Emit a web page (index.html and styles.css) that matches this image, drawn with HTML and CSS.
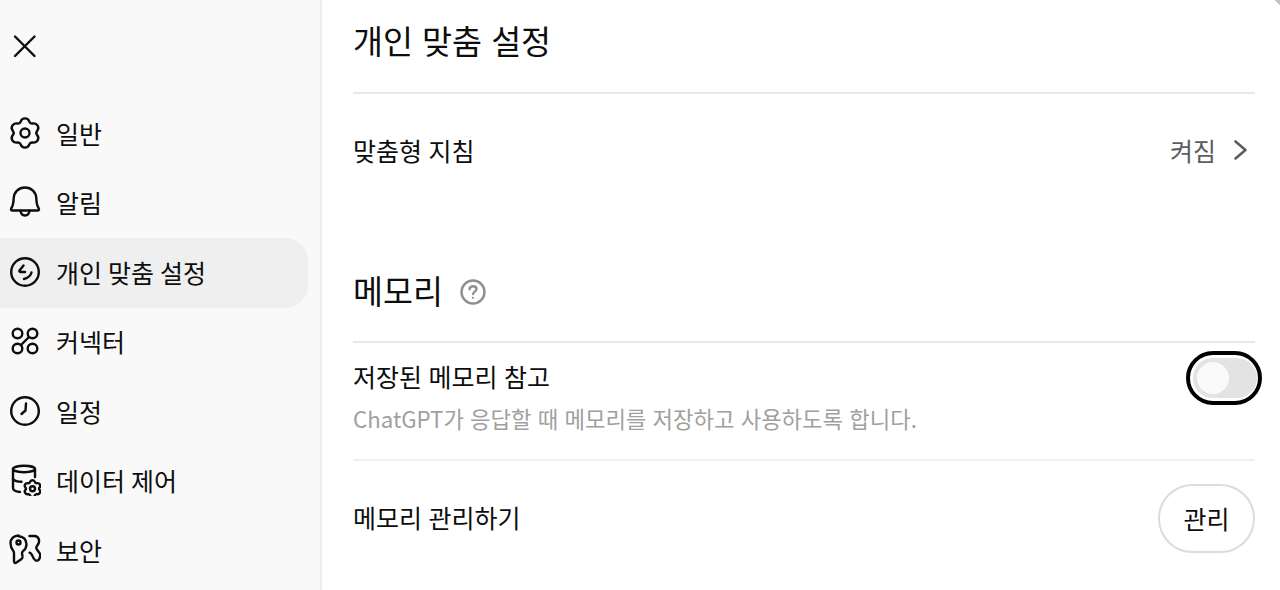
FILE: index.html
```html
<!DOCTYPE html>
<html lang="ko">
<head>
    <meta charset="UTF-8">
    <title>개인 맞춤 설정</title>
    <link rel="stylesheet" href="styles.css">
</head>
<body>
    <div class="dialog">
        <aside class="sidebar">
            <button class="close-btn" aria-label="닫기">
                <svg class="icon" viewBox="0 0 28 28"><path d="M4 4.500 23.500 24M23.500 4.500 4 24"/></svg>
            </button>
            <nav class="nav">
                <a class="nav-item">
                    <svg class="icon" viewBox="0 0 32 32"><path d="M20.350 4.520A3 3 0 0 0 23.770 6.490A4.600 4.600 0 0 1 28.120 14.030A3 3 0 0 0 28.120 17.970A4.600 4.600 0 0 1 23.770 25.510A3 3 0 0 0 20.350 27.480A4.600 4.600 0 0 1 11.650 27.480A3 3 0 0 0 8.230 25.510A4.600 4.600 0 0 1 3.880 17.970A3 3 0 0 0 3.880 14.030A4.600 4.600 0 0 1 8.230 6.490A3 3 0 0 0 11.650 4.520A4.600 4.600 0 0 1 20.350 4.520Z"/><circle cx="16" cy="16" r="4.500"/></svg>
                    <span>일반</span>
                </a>
                <a class="nav-item">
                    <svg class="icon" viewBox="0 0 32 32"><path d="M16 1.500c-6.500 0-11 4.800-11.300 10.800-.2 5-1 8-2.400 10-.7 1.100-.1 2.200 1.200 2.200h25c1.300 0 1.900-1.100 1.200-2.200-1.400-2-2.200-5-2.400-10C27 6.300 22.500 1.500 16 1.500Z"/><path d="M11.500 24.700c.3 2.800 2.200 4.800 4.500 4.800s4.200-2 4.500-4.800"/></svg>
                    <span>알림</span>
                </a>
                <a class="nav-item is-active">
                    <svg class="icon" viewBox="0 0 32 32"><circle cx="16" cy="16" r="13.800"/><path d="M14.500 9.500 10.500 14.500c-.4.7 0 1.500.8 1.500H16"/><path d="M22.500 16.500c-.8 3-3.500 5.500-7.500 6.500"/></svg>
                    <span>개인 맞춤 설정</span>
                </a>
                <a class="nav-item">
                    <svg class="icon" viewBox="0 0 32 32"><circle cx="8.500" cy="8.500" r="4.800"/><circle cx="23.500" cy="8.500" r="4.800"/><circle cx="8.500" cy="23.500" r="4.800"/><circle cx="23.500" cy="23.500" r="4.800"/><path d="M20 12 12 20"/></svg>
                    <span>커넥터</span>
                </a>
                <a class="nav-item">
                    <svg class="icon" viewBox="0 0 32 32"><circle cx="16" cy="16" r="13.800"/><path d="M17 8.500 16.500 15.500 12.500 19"/></svg>
                    <span>일정</span>
                </a>
                <a class="nav-item">
                    <svg class="icon" viewBox="0 0 32 32"><ellipse cx="15" cy="5" rx="11" ry="3.200"/><path d="M4 5v19c0 2 2 3.500 7 4"/><path d="M26 5v8"/><path d="M4 15c1.600 2 5.200 2.800 8.500 2.800"/><path class="scaled" transform="translate(14.200 15.400) scale(.58)" d="M20.350 4.520A3 3 0 0 0 23.770 6.490A4.600 4.600 0 0 1 28.120 14.030A3 3 0 0 0 28.120 17.970A4.600 4.600 0 0 1 23.770 25.510A3 3 0 0 0 20.350 27.480A4.600 4.600 0 0 1 11.650 27.480A3 3 0 0 0 8.230 25.510A4.600 4.600 0 0 1 3.880 17.970A3 3 0 0 0 3.880 14.030A4.600 4.600 0 0 1 8.230 6.490A3 3 0 0 0 11.650 4.520A4.600 4.600 0 0 1 20.350 4.520Z"/><circle cx="23.500" cy="24.700" r="2.500"/></svg>
                    <span>데이터 제어</span>
                </a>
                <a class="nav-item">
                    <svg class="icon" viewBox="0 0 32 32"><path d="M9.500 1.500C5 1.500 1.500 4.800 1.500 9.200c0 3.300 1.400 6 3 8 .5.700.5 1.300.5 2.300v7.500c0 2 1 2.500 2.500 1.500l5-3.500c1-.7 1.300-1.500 1-2.800l-.5-2.500c-.2-1 .2-1.700 1-2.500 2-1.700 3.500-4.200 3.500-7 0-4.800-3.500-8-8-8Z"/><circle cx="9.500" cy="8.500" r="2"/><path d="M20.500 2h4.500c2.800 0 4.500 1.500 5 4 .4 2-.4 3.800-1.700 5.500-1 1.300-1.400 2.500-.5 3.700l2.500 3.500c1 1.500 1.200 3.500.3 5.500-.8 2-2.500 3-4.300 2-1.700-1-2.400-3-3.200-5-.4-1-1-2-2.500-2.500"/></svg>
                    <span>보안</span>
                </a>
            </nav>
        </aside>
        <main class="content">
            <h1 class="title">개인 맞춤 설정</h1>
            <div class="row row-instructions">
                <span>맞춤형 지침</span>
                <span class="row-value">
                    켜짐
                    <svg class="chevron" viewBox="0 0 20 28"><path d="M4.500 5.500 14.500 14 4.500 22.500"/></svg>
                </span>
            </div>
            <div class="section-head">
                <h2 class="section-title">메모리</h2>
                <svg class="help" viewBox="0 0 28 28"><circle cx="14" cy="14" r="11.500"/><path d="M10.600 11.200c.2-1.900 1.600-3 3.500-3s3.400 1.200 3.400 2.900c0 2.500-3.400 2.600-3.400 5"/><circle class="help-dot" cx="14" cy="19.800" r="1.100"/></svg>
            </div>
            <div class="row row-memory">
                <div>
                    <div class="row-label">저장된 메모리 참고</div>
                    <div class="row-desc">ChatGPT가 응답할 때 메모리를 저장하고 사용하도록 합니다.</div>
                </div>
                <div class="switch-focus">
                    <div class="switch"><span class="knob"></span></div>
                </div>
            </div>
            <div class="row row-manage">
                <span class="manage-label">메모리 관리하기</span>
                <button class="btn">관리</button>
            </div>
        </main>
    </div>
    <div class="corner"></div>
</body>
</html>
```

FILE: styles.css
```css
* {
    margin: 0;
    padding: 0;
    box-sizing: border-box;
}

html, body {
    height: 100%;
    overflow: hidden;
}

body {
    font-family: "Noto Sans CJK KR", "Noto Sans", sans-serif;
    font-size: 25px;
    word-spacing: -0.5px;
    color: #0d0d0d;
    background: #fff;
}

.dialog {
    display: flex;
    height: 590px;
}

.icon {
    width: 32px;
    height: 32px;
    flex: none;
    fill: none;
    stroke: #0d0d0d;
    stroke-width: 2.400;
    stroke-linecap: round;
    stroke-linejoin: round;
}

.scaled {
    vector-effect: non-scaling-stroke;
}

/* dialog corner peeking in at the top right */
.corner {
    position: absolute;
    top: 0;
    right: 0;
    width: 5px;
    height: 5px;
    background: linear-gradient(to top right, transparent 50%, #c4c4c4 50%);
}

/* sidebar */
.sidebar {
    width: 322px;
    flex: none;
    background: #f9f9f9;
    border-right: 2px solid #ededed;
    padding: 32px 12px 0 0;
}

.close-btn {
    display: block;
    width: 28px;
    height: 28px;
    margin-left: 11px;
    background: none;
    border: 0;
}

.close-btn .icon {
    width: 28px;
    height: 28px;
}

.nav {
    display: flex;
    flex-direction: column;
    margin-top: 39px;
}

.nav-item {
    display: flex;
    align-items: center;
    gap: 15px;
    height: 69.500px;
    padding: 0 0 2px 9px;
    word-spacing: -1px;
    border-radius: 0 22px 22px 0;
}

.nav-item.is-active {
    background: #efefef;
}

/* main column */
.content {
    flex: 1;
    padding: 0 25px 0 31px;
    min-width: 0;
}

.title {
    height: 94px;
    padding-top: 14px;
    font-size: 32.600px;
    line-height: 52px;
    font-weight: 400;
    word-spacing: 0;
    border-bottom: 2px solid #e8e8e8;
}

.row {
    display: flex;
    justify-content: space-between;
    align-items: center;
}

.row-instructions {
    height: 115px;
    align-items: flex-start;
    padding-top: 37px;
    line-height: 38px;
}

.row-value {
    display: flex;
    align-items: center;
    gap: 15px;
    margin-right: 4px;
    color: #5d5d5d;
}

.chevron {
    width: 20px;
    height: 28px;
    fill: none;
    stroke: #5d5d5d;
    stroke-width: 2.600;
    stroke-linecap: round;
    stroke-linejoin: round;
}

.section-head {
    display: flex;
    align-items: center;
    gap: 16px;
    height: 134px;
    padding-top: 29px;
    border-bottom: 2px solid #e8e8e8;
}

.section-title {
    font-size: 32.600px;
    font-weight: 400;
}

.help {
    width: 28px;
    height: 28px;
    margin-top: 5px;
    fill: none;
    stroke: #8f8f8f;
    stroke-width: 2.400;
    stroke-linecap: round;
}

.help-dot {
    fill: #8f8f8f;
    stroke: none;
}

.row-memory {
    height: 118px;
    align-items: flex-start;
    padding-top: 14px;
    border-bottom: 2px solid #efefef;
}

.row-label {
    line-height: 38px;
}

.row-desc {
    margin-top: 5px;
    font-size: 22.260px;
    line-height: 36px;
    word-spacing: 0;
    color: #a0a0a0;
}

/* focus ring runs past the column edge */
.switch-focus {
    width: 76px;
    height: 54px;
    margin: -6px -7px 0 0;
    padding: 3px 1px 3px 3px;
    border: 4px solid #000;
    border-radius: 27px;
}

.switch {
    position: relative;
    width: 64px;
    height: 40px;
    border-radius: 20px;
    background: #e3e3e3;
}

.knob {
    position: absolute;
    left: 4px;
    top: 4px;
    width: 32px;
    height: 32px;
    border-radius: 50%;
    background: #fafafa;
}

.row-manage {
    height: 114px;
}

.manage-label {
    margin-top: -2px;
}

.btn {
    width: 97px;
    height: 69px;
    border: 2px solid #dcdcdc;
    border-radius: 35px;
    background: #fff;
    font: inherit;
    color: #0d0d0d;
}
```
